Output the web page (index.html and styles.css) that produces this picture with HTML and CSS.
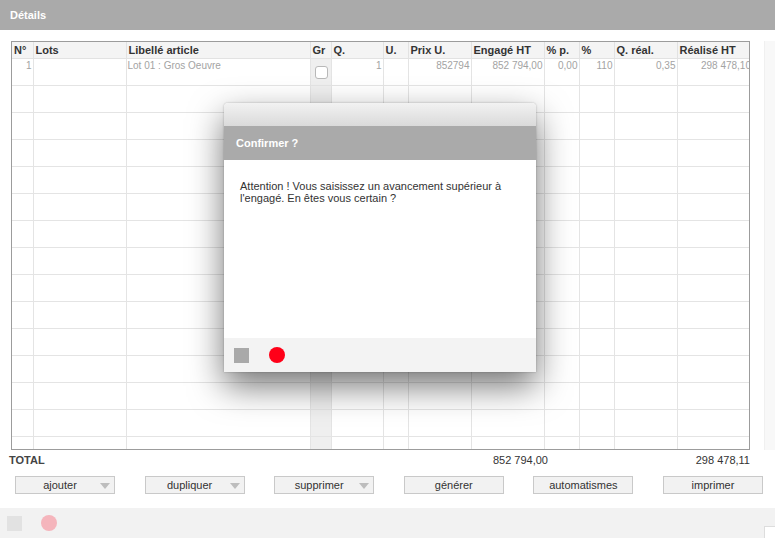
FILE: index.html
```html
<!DOCTYPE html>
<html lang="fr">
<head>
  <meta charset="UTF-8" />
  <title>Détails</title>
  <link rel="stylesheet" href="styles.css">
</head>
<body>

  <div class="page">
    <div class="section-bar">Détails</div>

    <div class="grid-zone">
      <div class="grid-wrap">
        <table class="grid">
          <colgroup>
            <col style="width:21px"><col style="width:93px"><col style="width:184px"><col style="width:21px">
            <col style="width:52px"><col style="width:25px"><col style="width:63px"><col style="width:73px">
            <col style="width:35px"><col style="width:35px"><col style="width:63px"><col style="width:75px">
          </colgroup>
          <thead>
            <tr>
              <th>N°</th><th>Lots</th><th>Libellé article</th><th>Gr</th><th>Q.</th><th>U.</th>
              <th>Prix U.</th><th>Engagé HT</th><th>% p.</th><th>%</th><th>Q. réal.</th><th>Réalisé HT</th>
            </tr>
          </thead>
          <tbody id="rows">
            <tr>
              <td class="num">1</td><td></td><td>Lot 01 : Gros Oeuvre</td>
              <td class="gr"><span class="check"></span></td>
              <td class="num">1</td><td></td><td class="num">852794</td><td class="num">852 794,00</td>
              <td class="num">0,00</td><td class="num">110</td><td class="num">0,35</td><td class="num clip">298 478,10</td>
            </tr>
          </tbody>
        </table>
      </div>
      <div class="side-strip"></div>
    </div>

    <div class="total-row">
      <span class="total-label">TOTAL</span>
      <span class="total-engage">852 794,00</span>
      <span class="total-realise">298 478,11</span>
    </div>

    <div class="actions">
      <button class="btn drop">ajouter</button>
      <button class="btn drop">dupliquer</button>
      <button class="btn drop">supprimer</button>
      <button class="btn">générer</button>
      <button class="btn">automatismes</button>
      <button class="btn">imprimer</button>
    </div>

    <div class="footer-bar">
      <span class="sq faded"></span>
      <span class="dot faded"></span>
      <span class="resize"></span>
    </div>
  </div>

  <div class="dialog">
    <div class="dialog-top"></div>
    <div class="dialog-title">Confirmer ?</div>
    <div class="dialog-body">
      Attention ! Vous saisissez un avancement supérieur à<br>l'engagé. En êtes vous certain ?
    </div>
    <div class="dialog-foot">
      <span class="sq"></span>
      <span class="dot"></span>
    </div>
  </div>

  <script>
    // empty grid lines below the first row
    var tbody = document.getElementById('rows');
    for (var i = 0; i < 15; i++) {
      var tr = document.createElement('tr');
      for (var c = 0; c < 12; c++) {
        var td = document.createElement('td');
        if (c === 3) td.className = 'gr';
        tr.appendChild(td);
      }
      tbody.appendChild(tr);
    }
  </script>
</body>
</html>
```

FILE: styles.css
```css
body {
  margin: 0;
  padding: 0;
  background: #fff;
  font-family: "Liberation Sans", Arial, sans-serif;
  font-size: 11px;
  color: #333;
}

.page {
  width: 775px;
  height: 538px;
  overflow: hidden;
  display: flex;
  flex-direction: column;
}

.section-bar {
  height: 30px;
  flex: none;
  background: #aaaaaa;
  color: #fff;
  font-weight: bold;
  font-size: 11px;
  line-height: 30px;
  padding-left: 10px;
}

.grid-zone {
  display: flex;
  flex: none;
  margin-top: 11px;
  height: 409px;
}

.grid-wrap {
  margin-left: 11px;
  width: 740px;
  height: 409px;
  box-sizing: border-box;
  border: 1px solid #9c9c9c;
  overflow: hidden;
}

.side-strip {
  width: 10px;
  margin-left: 14px;
  background: #f8f8f8;
  border-left: 1px solid #f0f0f0;
}

.grid {
  table-layout: fixed;
  border-collapse: collapse;
  border-style: hidden;
  width: 740px;
}

.grid th {
  height: 16px;
  background: #f4f4f4;
  border: 1px solid #e2e2e2;
  text-align: left;
  font-weight: bold;
  font-size: 11px;
  color: #333;
  padding: 0 2px;
  white-space: nowrap;
  overflow: hidden;
}

.grid td {
  height: 25px;
  border: 1px solid #e4e4e4;
  vertical-align: top;
  padding: 1px 1px 0 1px;
  font-size: 10px;
  color: #a3a3a3;
  white-space: nowrap;
  overflow: hidden;
}

.grid td.num {
  text-align: right;
}

.grid td.clip {
  text-overflow: clip;
}

.grid td.gr {
  background: #efefef;
}

.check {
  display: block;
  width: 11px;
  height: 11px;
  margin: 6px 0 0 3px;
  border: 1px solid #b8b8b8;
  border-radius: 3px;
  background: #fff;
}

.total-row {
  position: relative;
  flex: none;
  height: 20px;
  line-height: 20px;
  font-size: 11px;
}

.total-label {
  position: absolute;
  left: 9px;
  font-weight: bold;
  color: #444;
}

.total-engage {
  position: absolute;
  right: 227px;
}

.total-realise {
  position: absolute;
  right: 25px;
}

.actions {
  display: flex;
  flex: none;
  gap: 29.6px;
  padding: 6px 0 0 15px;
  height: 32px;
  box-sizing: border-box;
}

.btn {
  flex: none;
  width: 100px;
  height: 18px;
  padding: 0;
  background: #f2f2f2;
  border: 1px solid #c9c9c9;
  border-radius: 0;
  font-family: inherit;
  font-size: 11px;
  color: #333;
  position: relative;
}

.btn.drop {
  padding-right: 16px;
  padding-left: 6px;
}

.btn.drop::after {
  content: "";
  position: absolute;
  right: 4px;
  top: 6px;
  border-left: 5px solid transparent;
  border-right: 5px solid transparent;
  border-top: 6px solid #bdbdbd;
}

.footer-bar {
  margin-top: 6px;
  flex: 1;
  background: #f2f2f2;
  display: flex;
  align-items: center;
  padding-left: 7px;
  gap: 19px;
  position: relative;
}

.sq {
  width: 15px;
  height: 15px;
  background: #a9a9a9;
}

.dot {
  width: 16px;
  height: 16px;
  border-radius: 50%;
  background: #ff0018;
}

.sq.faded {
  background: #e2e2e2;
}

.dot.faded {
  background: #f5b5bc;
}

.resize {
  position: absolute;
  right: 0;
  bottom: 0;
  width: 10px;
  height: 11px;
  background: #fff;
  border-left: 1px solid #ddd;
  border-top: 1px solid #ddd;
}

.dialog {
  position: absolute;
  left: 224px;
  top: 103px;
  width: 312px;
  height: 269px;
  background: #fff;
  border-radius: 4px 4px 0 0;
  box-shadow: 0 14px 34px rgba(0, 0, 0, 0.55), 0 0 2px rgba(0, 0, 0, 0.3);
  display: flex;
  flex-direction: column;
}

.dialog-top {
  height: 23px;
  border-radius: 4px 4px 0 0;
  background: linear-gradient(to bottom, #f2f2f2, #dadada);
}

.dialog-title {
  height: 34px;
  background: #aaaaaa;
  color: #fff;
  font-weight: bold;
  font-size: 11px;
  line-height: 34px;
  padding-left: 12px;
}

.dialog-body {
  flex: 1;
  padding: 20px 16px 0 16px;
  font-size: 11px;
  line-height: 12px;
  color: #333;
}

.dialog-foot {
  height: 34px;
  background: #f3f3f3;
  display: flex;
  align-items: center;
  padding-left: 10px;
  gap: 20px;
}
```
